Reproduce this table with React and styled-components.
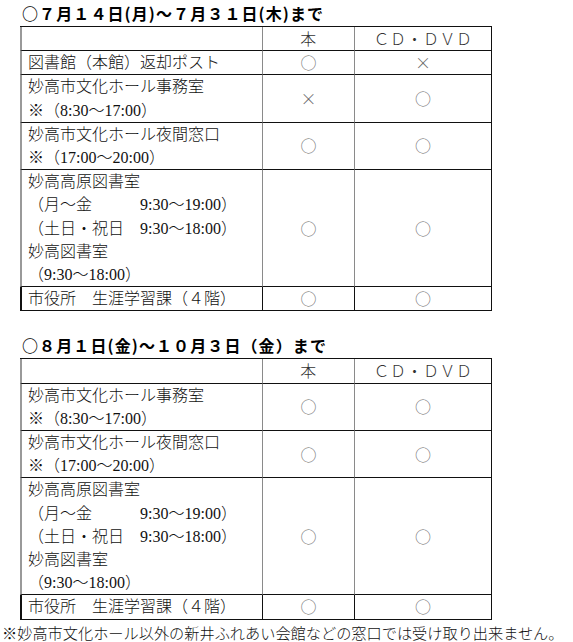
import React from 'react'
import styled, { createGlobalStyle } from 'styled-components'

const GlobalStyle = createGlobalStyle`
  body {
    margin: 0;
    background: #fff;
    color: #222;
    font-family: "Liberation Serif", "Noto Sans CJK JP", serif;
  }
`

const Page = styled.div`
  width: 573px;
  padding-top: 3px;
`

const Heading = styled.h2`
  margin: 0 0 3px 22px;
  font-family: "Noto Sans CJK JP", sans-serif;
  font-weight: 700;
  font-size: 16px;
  line-height: 20px;
  letter-spacing: 1.1px;
  color: #000;
`

const Spacer = styled.div`
  height: 24px;
`

const Table = styled.table`
  margin-left: 20px;
  width: 472px;
  table-layout: fixed;
  border-collapse: separate;
  border-spacing: 0;
  border-top: 1px solid #111;
`

const Cell = styled.td`
  padding: 0 6px;
  vertical-align: middle;
  font-size: 16px;
  line-height: 23.2px;
  font-weight: 300;
  color: #111;
  border-bottom: 1px solid #111;
  border-right: 1px solid ${p => (p.$edge || p.$last ? '#111' : '#8a8a8a')};
  border-left: ${p => (p.$first ? `2px solid ${p.$last ? '#111' : '#999'}` : 'none')};
  white-space: nowrap;
`

const Mark = styled(Cell)`
  text-align: center;
  font-family: "Noto Sans CJK JP", sans-serif;
  color: #666;
  padding: 0;
`

const HeadCell = styled(Mark)`
  color: #333;
  letter-spacing: 0.5px;
`

const Line = styled.div``

const Note = styled.p`
  margin: 5px 0 0 2px;
  font-size: 15.2px;
  line-height: 18px;
  font-weight: 300;
  color: #111;
  white-space: nowrap;
`

const lib = [
  '妙高高原図書室',
  '（月～金　　　9:30～19:00）',
  '（土日・祝日　9:30～18:00）',
  '妙高図書室',
  '（9:30～18:00）',
]

const period1 = [
  { lines: ['図書館（本館）返却ポスト'], book: '○', cd: '×' },
  { lines: ['妙高市文化ホール事務室', '※（8:30～17:00）'], book: '×', cd: '○' },
  { lines: ['妙高市文化ホール夜間窓口', '※（17:00～20:00）'], book: '○', cd: '○' },
  { lines: lib, book: '○', cd: '○' },
  { lines: ['市役所　生涯学習課（４階）'], book: '○', cd: '○' },
]

const period2 = [
  { lines: ['妙高市文化ホール事務室', '※（8:30～17:00）'], book: '○', cd: '○' },
  { lines: ['妙高市文化ホール夜間窓口', '※（17:00～20:00）'], book: '○', cd: '○' },
  { lines: lib, book: '○', cd: '○' },
  { lines: ['市役所　生涯学習課（４階）'], book: '○', cd: '○' },
]

function Schedule({ rows }) {
  return (
    <Table>
      <colgroup>
        <col style={{ width: 243 }} />
        <col style={{ width: 92 }} />
        <col style={{ width: 137 }} />
      </colgroup>
      <tbody>
        <tr>
          <Cell $first>&nbsp;</Cell>
          <HeadCell>本</HeadCell>
          <HeadCell $edge>ＣＤ・ＤＶＤ</HeadCell>
        </tr>
        {rows.map((r, i) => {
          const last = i === rows.length - 1
          return (
            <tr key={i}>
              <Cell $first $last={last}>
                {r.lines.map((l, j) => <Line key={j}>{l}</Line>)}
              </Cell>
              <Mark $last={last}>{r.book}</Mark>
              <Mark $edge $last={last}>{r.cd}</Mark>
            </tr>
          )
        })}
      </tbody>
    </Table>
  )
}

export default function App() {
  return (
    <Page>
      <GlobalStyle />
      <Heading>○７月１４日(月)～７月３１日(木)まで</Heading>
      <Schedule rows={period1} />
      <Spacer />
      <Heading>○８月１日(金)～１０月３日（金）まで</Heading>
      <Schedule rows={period2} />
      <Note>※妙高市文化ホール以外の新井ふれあい会館などの窓口では受け取り出来ません。</Note>
    </Page>
  )
}
